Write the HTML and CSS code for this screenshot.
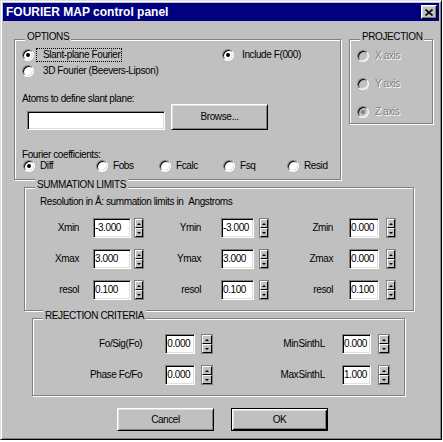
FILE: index.html
```html
<!DOCTYPE html>
<html>
<head>
<meta charset="utf-8">
<title>FOURIER MAP control panel</title>
<link rel="stylesheet" href="styles.css">
</head>
<body>
<div class="window">
  <div class="titlebar">
    <span class="title">FOURIER MAP control panel</span>
    <span class="close"><svg width="8" height="7" viewBox="0 0 8 7"><path d="M0.5 0.5 L7.5 6.5 M7.5 0.5 L0.5 6.5" stroke="#000" stroke-width="1.6" fill="none"/></svg></span>
  </div>

  <div class="top-row">
    <div class="group options">
      <span class="legend">OPTIONS</span>
      <div class="opt-grid">
        <div class="radio g3"><span class="rb on"></span><span class="focus">Slant-plane Fourier</span></div>
        <div class="radio g8"><span class="rb on"></span><span>Include F(000)</span></div>
        <div class="radio g9"><span class="rb"></span><span>3D Fourier (Beevers-Lipson)</span></div>
      </div>
      <div class="caption atoms-cap">Atoms to define slant plane:</div>
      <div class="atoms-row">
        <span class="textbox atoms-box"></span>
        <span class="btn browse">Browse...</span>
      </div>
      <div class="caption coeff-cap">Fourier coefficients:</div>
      <div class="coeff-row">
        <div class="radio"><span class="rb on"></span><span>Diff</span></div>
        <div class="radio"><span class="rb"></span><span>Fobs</span></div>
        <div class="radio"><span class="rb"></span><span>Fcalc</span></div>
        <div class="radio"><span class="rb"></span><span>Fsq</span></div>
        <div class="radio"><span class="rb"></span><span>Resid</span></div>
      </div>
    </div>

    <div class="group projection">
      <span class="legend">PROJECTION</span>
      <div class="proj-list">
        <div class="radio g6 disabled"><span class="rb"></span><span>X axis</span></div>
        <div class="radio g6 disabled"><span class="rb"></span><span>Y axis</span></div>
        <div class="radio g6 disabled"><span class="rb on"></span><span>Z axis</span></div>
      </div>
    </div>
  </div>

  <div class="group summation">
    <span class="legend">SUMMATION LIMITS</span>
    <div class="caption res-cap">Resolution in Å: summation limits in &nbsp;Angstroms</div>
    <div class="sum-grid">
      <div class="field c1"><span class="lbl">Xmin</span><span class="textbox val">-3.000</span><span class="spin"><i class="up"></i><i class="dn"></i></span></div>
      <div class="field c2"><span class="lbl">Ymin</span><span class="textbox val">-3.000</span><span class="spin"><i class="up"></i><i class="dn"></i></span></div>
      <div class="field c3"><span class="lbl">Zmin</span><span class="textbox val">0.000</span><span class="spin"><i class="up"></i><i class="dn"></i></span></div>
      <div class="field c1"><span class="lbl">Xmax</span><span class="textbox val">3.000</span><span class="spin"><i class="up"></i><i class="dn"></i></span></div>
      <div class="field c2"><span class="lbl">Ymax</span><span class="textbox val">3.000</span><span class="spin"><i class="up"></i><i class="dn"></i></span></div>
      <div class="field c3"><span class="lbl">Zmax</span><span class="textbox val">0.000</span><span class="spin"><i class="up"></i><i class="dn"></i></span></div>
      <div class="field c1"><span class="lbl">resol</span><span class="textbox val">0.100</span><span class="spin"><i class="up"></i><i class="dn"></i></span></div>
      <div class="field c2"><span class="lbl">resol</span><span class="textbox val">0.100</span><span class="spin"><i class="up"></i><i class="dn"></i></span></div>
      <div class="field c3"><span class="lbl">resol</span><span class="textbox val">0.100</span><span class="spin"><i class="up"></i><i class="dn"></i></span></div>
    </div>
  </div>

  <div class="group rejection">
    <span class="legend">REJECTION CRITERIA</span>
    <div class="rej-grid">
      <div class="field r1"><span class="lbl">Fo/Sig(Fo)</span><span class="textbox val">0.000</span><span class="spin"><i class="up"></i><i class="dn"></i></span></div>
      <div class="field r2"><span class="lbl">Min&#8202;Sinth&#8202;L</span><span class="textbox val">0.000</span><span class="spin"><i class="up"></i><i class="dn"></i></span></div>
      <div class="field r1"><span class="lbl">Phase Fc/Fo</span><span class="textbox val">0.000</span><span class="spin"><i class="up"></i><i class="dn"></i></span></div>
      <div class="field r2"><span class="lbl">Max&#8202;Sinth&#8202;L</span><span class="textbox val">1.000</span><span class="spin"><i class="up"></i><i class="dn"></i></span></div>
    </div>
  </div>

  <div class="actions">
    <span class="btn cancel">Cancel</span>
    <span class="btn default">OK</span>
  </div>
</div>
</body>
</html>
```

FILE: styles.css
```css
body {
  margin: 0;
  background: #fff;
  font-family: "Liberation Sans", Arial, sans-serif;
  font-size: 10px;
  letter-spacing: -0.4px;
  line-height: 12px;
  color: #000;
}

.window {
  width: 442px;
  height: 440px;
  box-sizing: border-box;
  background: #c0c0c0;
  border: 1px solid;
  border-color: #dfdfdf #000 #000 #dfdfdf;
  box-shadow: inset 1px 1px 0 #fff, inset -1px -1px 0 #808080;
  padding: 2px;
}

.titlebar {
  height: 18px;
  background: #000080;
  display: flex;
  align-items: center;
  justify-content: space-between;
  padding: 0 2px 0 3px;
}

.title {
  color: #fff;
  font-family: "Liberation Sans", Arial, sans-serif;
  font-weight: bold;
  font-size: 12px;
  letter-spacing: 0;
  line-height: 18px;
}

.close {
  width: 16px;
  height: 14px;
  box-sizing: border-box;
  background: #c0c0c0;
  border: 1px solid;
  border-color: #fff #000 #000 #fff;
  box-shadow: inset -1px -1px 0 #808080, inset 1px 1px 0 #dfdfdf;
  display: flex;
  align-items: center;
  justify-content: center;
}

/* group boxes */
.group {
  position: relative;
  box-sizing: border-box;
  border: 1px solid #808080;
  box-shadow: inset 1px 1px 0 #fff, 1px 1px 0 #fff;
}

.legend {
  position: absolute;
  top: -9px;
  left: 10px;
  padding: 0 2px;
  background: #c0c0c0;
  line-height: 12px;
  white-space: nowrap;
}

.top-row {
  display: flex;
  align-items: flex-start;
  gap: 8px;
  margin: 18px 0 0 11px;
}

.options {
  width: 327px;
  height: 141px;
  padding: 9px 0 0 7px;
}

.projection {
  width: 84px;
  height: 85px;
  padding: 10px 0 0 7px;
}

/* radio buttons */
.radio {
  display: flex;
  align-items: center;
  gap: 5px;
  height: 12px;
  white-space: nowrap;
}
.radio.g3 { gap: 3px; }
.radio.g6 { gap: 6px; }
.radio.g8 { gap: 8px; }
.radio.g9 { gap: 9px; }

.rb {
  position: relative;
  flex: none;
  width: 12px;
  height: 12px;
  box-sizing: border-box;
  border-radius: 50%;
  border: 1px solid;
  border-color: #808080 #fff #fff #808080;
  background: #fff;
  box-shadow: inset 1px 1px 0 #000, inset -1px -1px 0 #dfdfdf;
}
.rb.on::after {
  content: "";
  position: absolute;
  left: 3px;
  top: 3px;
  width: 4px;
  height: 4px;
  border-radius: 50%;
  background: #000;
}
.disabled { color: #808080; text-shadow: 1px 1px 0 #fff; }
.disabled .rb { background: #c0c0c0; }
.disabled .rb.on::after { background: #808080; }

.focus {
  outline: 1px dotted #000;
  padding: 0 1px 0 6px;
  line-height: 12px;
}

.opt-grid {
  display: grid;
  grid-template-columns: 200px auto;
  row-gap: 4px;
}

.atoms-cap { margin-top: 16px; }

.atoms-row {
  display: flex;
  align-items: flex-end;
  margin-top: -1px;
}

.textbox {
  box-sizing: border-box;
  display: block;
  background: #fff;
  border: 1px solid;
  border-color: #808080 #fff #fff #808080;
  box-shadow: inset 1px 1px 0 #000, inset -1px -1px 0 #dfdfdf;
}

.atoms-box {
  width: 138px;
  height: 19px;
  margin-left: 5px;
}

.btn {
  box-sizing: border-box;
  display: flex;
  align-items: center;
  justify-content: center;
  background: #c0c0c0;
  border: 1px solid;
  border-color: #fff #000 #000 #fff;
  box-shadow: inset 1px 1px 0 #dfdfdf, inset -1px -1px 0 #808080;
}

.browse {
  width: 97px;
  height: 26px;
  margin-left: 6px;
}

.coeff-cap { margin-top: 19px; }

.coeff-row {
  display: grid;
  grid-template-columns: 73px 63px 64px 64px auto;
  margin: -1px 0 0 1px;
}

.proj-list {
  display: flex;
  flex-direction: column;
  gap: 16px;
}

/* numeric fields */
.field {
  display: flex;
  align-items: center;
  height: 20px;
}
.lbl {
  text-align: right;
  white-space: nowrap;
}
.val {
  height: 20px;
  padding-left: 1px;
  line-height: 18px;
  white-space: nowrap;
  overflow: hidden;
}

.spin {
  display: flex;
  flex-direction: column;
  width: 10px;
  height: 20px;
  box-sizing: border-box;
  border: 1px solid #808080;
}
.spin i {
  flex: 1;
  box-sizing: border-box;
  display: flex;
  align-items: center;
  justify-content: center;
  background: #c0c0c0;
  border: 1px solid;
  border-color: #fff #000 #000 #fff;
}
.spin .up::before {
  content: "";
  border-left: 2px solid transparent;
  border-right: 2px solid transparent;
  border-bottom: 2px solid #000;
}
.spin .dn::before {
  content: "";
  border-left: 2px solid transparent;
  border-right: 2px solid transparent;
  border-top: 2px solid #000;
}

.summation {
  width: 390px;
  height: 124px;
  margin: 7px 0 0 21px;
  padding: 8px 0 0 15px;
}

.sum-grid {
  display: grid;
  grid-template-columns: 104px 125px auto;
  row-gap: 11px;
  margin-top: 10px;
}

.c1 .lbl { width: 39px; }
.c1 .val { width: 38px; margin-left: 14px; }
.c1 .spin { margin-left: 3px; }
.c2 .lbl { width: 57px; }
.c2 .val { width: 33px; margin-left: 20px; }
.c2 .spin { margin-left: 5px; }
.c3 .lbl { width: 64px; }
.c3 .val { width: 30px; margin-left: 16px; }
.c3 .spin { margin-left: 7px; }

.rejection {
  width: 373px;
  height: 78px;
  margin: 7px 0 0 29px;
  padding: 15px 0 0 0;
}

.rej-grid {
  display: grid;
  grid-template-columns: 180px auto;
  row-gap: 11px;
}

.r1 .lbl { width: 110px; }
.r1 .val { width: 30px; margin-left: 23px; }
.r1 .spin { margin-left: 6px; width: 12px; }
.r2 .lbl { width: 112px; }
.r2 .val { width: 29px; margin-left: 17px; }
.r2 .spin { margin-left: 7px; width: 12px; }

.actions {
  display: flex;
  gap: 17px;
  margin-top: 12px;
  padding-left: 114px;
}
.actions .btn {
  width: 97px;
  height: 23px;
}
.btn.default {
  border: 1px solid #000;
  box-shadow: inset 1px 1px 0 #fff, inset -1px -1px 0 #000, inset 2px 2px 0 #dfdfdf, inset -2px -2px 0 #808080;
}
```
